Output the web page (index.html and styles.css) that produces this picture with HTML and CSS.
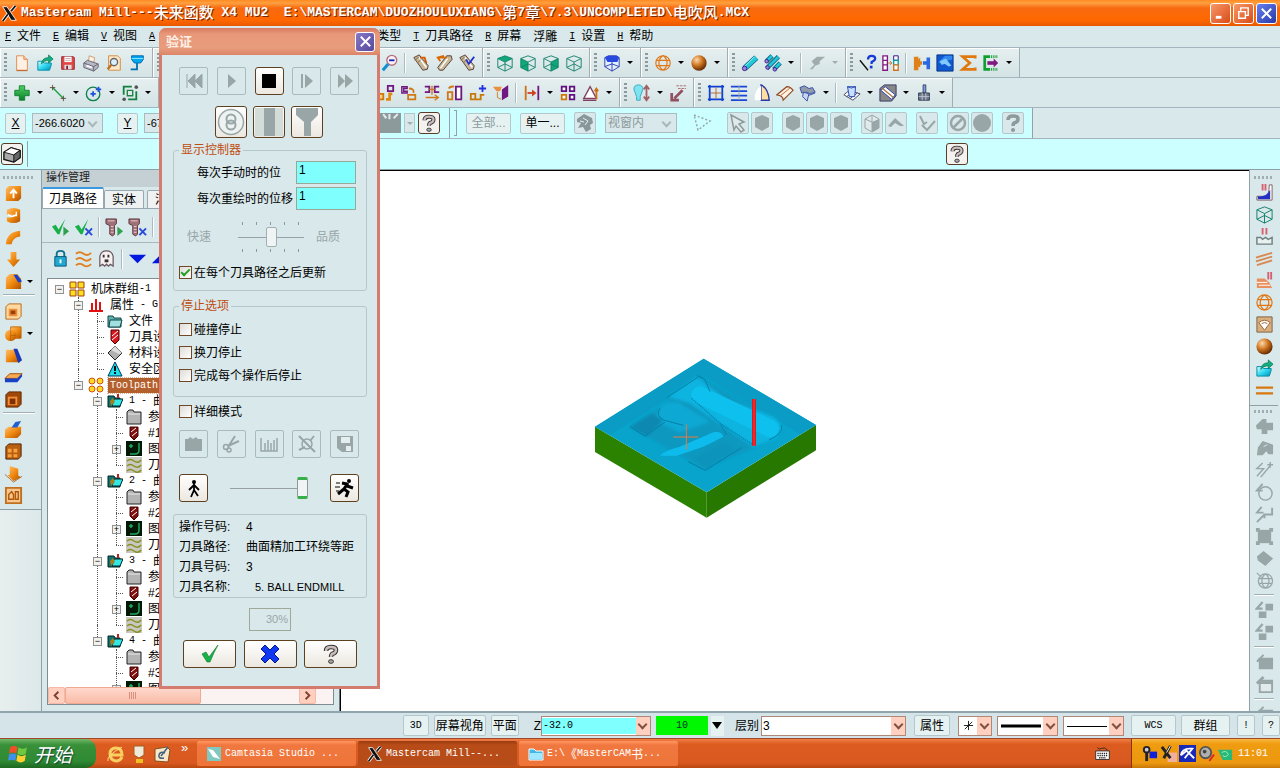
FILE: index.html
```html
<!DOCTYPE html>
<html lang="zh-CN">
<head>
<meta charset="utf-8">
<title>Mastercam Mill</title>
<link rel="stylesheet" href="styles.css">
</head>
<body>
<svg class="sprite" aria-hidden="true">
<defs>
<linearGradient id="gOr" x1="0" y1="0" x2="1" y2="1"><stop offset="0" stop-color="#ffc070"/><stop offset=".5" stop-color="#f08a10"/><stop offset="1" stop-color="#b05000"/></linearGradient>
<radialGradient id="gBall" cx=".35" cy=".3" r=".75"><stop offset="0" stop-color="#ffd9a8"/><stop offset=".5" stop-color="#cc7420"/><stop offset="1" stop-color="#5a2400"/></radialGradient>
<linearGradient id="gCy" x1="0" y1="0" x2="1" y2="1"><stop offset="0" stop-color="#e0ffff"/><stop offset=".5" stop-color="#30d8f0"/><stop offset="1" stop-color="#0090b8"/></linearGradient>
<linearGradient id="gGr" x1="0" y1="0" x2="0" y2="1"><stop offset="0" stop-color="#50d060"/><stop offset="1" stop-color="#0a8030"/></linearGradient>
</defs>
<symbol id="logo" viewBox="0 0 20 20"><path d="M2 2h5l11 16h-6z" fill="#111" stroke="#fff"/><path d="M17 1l-5 6M8 11l-6 8" stroke="#fff" stroke-width="4"/><path d="M17 1l-5 6M8 11l-6 8" stroke="#111" stroke-width="2"/></symbol>
<symbol id="new" viewBox="0 0 20 20"><path d="M4 2h8l4 4v12H4z" fill="#fff0e4" stroke="#e08850"/><path d="M12 2v4h4" fill="#ffc8a0" stroke="#e08850"/><path d="M4 18.500h12" stroke="#c05818"/></symbol>
<symbol id="open" viewBox="0 0 20 20"><path d="M2 18V8h5l2 2h8v2l-2 6z" fill="url(#gCy)" stroke="#008ca8"/><path d="M6 11q1-7 8-7V1l5 4.500-5 4.500V7q-5 0-8 4z" fill="#10b080" stroke="#006848" stroke-width=".7"/></symbol>
<symbol id="save" viewBox="0 0 20 20"><path d="M3 3h13l1 1v13H3z" fill="#e04848" stroke="#902030"/><path d="M6 3h8v6H6z" fill="#fff"/><path d="M7 5h6M7 7h6" stroke="#b0b0b0"/><path d="M6 12h8v5H6z" fill="#ddd"/><path d="M8 13h2v4H8z" fill="#802030"/></symbol>
<symbol id="print" viewBox="0 0 20 20"><path d="M7 9l1-7 6 2-1 6z" fill="#fff0e0" stroke="#c89870"/><path d="M2 10l4-3 12 4v4l-5 4-11-4z" fill="#b8b8c4" stroke="#606070"/><path d="M2 10l11 4 5-3M13 14v5" fill="none" stroke="#606070"/><path d="M5 13l6 2" stroke="#fff" stroke-width="2"/></symbol>
<symbol id="preview" viewBox="0 0 20 20"><path d="M4 2h10l3 3v13H4z" fill="#ffe8c8" stroke="#d08840"/><circle cx="10" cy="9" r="4" fill="#d8f0ff" stroke="#666" stroke-width="1.500"/><path d="M7 12l-4 5" stroke="#b87020" stroke-width="2.500"/></symbol>
<symbol id="plug" viewBox="0 0 20 20"><path d="M4 2h13v4l-3 4h-7L4 6z" fill="#00a8f0" stroke="#0060a8"/><path d="M4 5h13" stroke="#90e8ff"/><path d="M10 10v7H3" fill="none" stroke="#0070b0" stroke-width="2"/></symbol>
<symbol id="zoomout" viewBox="0 0 20 20"><circle cx="12" cy="7" r="5.500" fill="#fff0f0" stroke="#b07080" stroke-width="1.500"/><path d="M9 7h6" stroke="#1020c0" stroke-width="2"/><path d="M8 11l-6 7" stroke="#1090d0" stroke-width="3.500"/></symbol>
<symbol id="pen" viewBox="0 0 20 20"><path d="M2 4l6-3 10 12-1 4-5 1z" fill="#c8b898" stroke="#503830"/><path d="M7 3l9 12" stroke="#fff" stroke-width="1.500"/><path d="M3 7l5-4M6 10l4-4" stroke="#806040"/></symbol>
<symbol id="pen1" viewBox="0 0 20 20"><use href="#pen"/><path d="M9 4l5 0 2 6" fill="none" stroke="#d85800" stroke-width="2"/></symbol>
<symbol id="pen2" viewBox="0 0 20 20"><path d="M18 2l1 4-10 12H5l-2-3L13 2z" fill="#c8b898" stroke="#503830"/><path d="M14 5L6 16" stroke="#fff" stroke-width="1.500"/><path d="M10 2L3 4l3 4M3 4h10" fill="none" stroke="#d86800" stroke-width="2"/></symbol>
<symbol id="pen3" viewBox="0 0 20 20"><use href="#pen"/><path d="M9 6l3 5 6-8" fill="none" stroke="#2030d0" stroke-width="2"/></symbol>
<symbol id="cube" viewBox="0 0 20 20"><path d="M2 5l8-3 8 3v10l-8 4-8-4zM2 5l8 4 8-4M10 9v10M2 15l8-4 8 4" fill="none" stroke="#108068"/></symbol>
<symbol id="cubeT" viewBox="0 0 20 20"><path d="M2 5l8-3 8 3-8 4z" fill="#10a878"/><use href="#cube"/></symbol>
<symbol id="cubeF" viewBox="0 0 20 20"><path d="M2 5l8 4v10l-8-4z" fill="#10a878"/><use href="#cube"/></symbol>
<symbol id="cubeR" viewBox="0 0 20 20"><path d="M10 9l8-4v10l-8 4z" fill="#10a878"/><use href="#cube"/></symbol>
<symbol id="cubeB" viewBox="0 0 20 20"><path d="M2 4l4-2h9l3 2v10l-8 5-8-5z" fill="#e0f0ff" stroke="#2838a8"/><path d="M2 4l4-2h9l3 2-2 5H5z" fill="#2848e0"/><path d="M10 9v10M2 14l8-3 8 3" stroke="#2838a8" fill="none"/></symbol>
<symbol id="globe" viewBox="0 0 20 20"><path d="M10 2a8 8 0 100 16 8 8 0 000-16zM10 2c-6 4-6 12 0 16M10 2c6 4 6 12 0 16M3 7h14M3 13h14" fill="none" stroke="#e07818" stroke-width="1.300"/></symbol>
<symbol id="ball" viewBox="0 0 20 20"><circle cx="10" cy="10" r="8.500" fill="url(#gBall)"/></symbol>
<symbol id="tube" viewBox="0 0 20 20"><path d="M4 16L17 4" stroke="#106080" stroke-width="6.500"/><path d="M4 16L17 4" stroke="#20c8d8" stroke-width="5"/><path d="M4 14L15 3" stroke="#a0f8ff"/><circle cx="4" cy="16" r="2.500" fill="#a080e0" stroke="#302080"/></symbol>
<symbol id="tubes" viewBox="0 0 20 20"><path d="M3 8l6-6M3 16L16 3M11 17l7-7" stroke="#106080" stroke-width="5"/><path d="M3 8l6-6M3 16L16 3M11 17l7-7" stroke="#20c8d8" stroke-width="3"/><g fill="#a080e0" stroke="#302080"><circle cx="3" cy="8" r="2"/><circle cx="4" cy="15" r="2"/><circle cx="12" cy="17" r="2"/></g></symbol>
<symbol id="hose" viewBox="0 0 20 20"><path d="M2 17l5-5-3-4 6-5h9l-6 5v3l-5 2-3 4z" fill="#a0acac"/></symbol>
<symbol id="ask" viewBox="0 0 20 20"><path d="M1 7l9 11" stroke="#111" stroke-width="1.500"/><path d="M10 6q0-4 4-4t4 3q0 2-4 4v2" fill="none" stroke="#1838d8" stroke-width="2.500"/><path d="M12 13h3v3h-3z" fill="#1838d8"/></symbol>
<symbol id="cmp" viewBox="0 0 20 20"><path d="M1 2h5v16H1zM1 7h5M1 12h5" fill="#fff" stroke="#801880" stroke-width="1.500"/><path d="M13 2h5v5h-5z" fill="#fff" stroke="#208"/><path d="M13 7h5v5h-5z" fill="#fff" stroke="#00a0a0" stroke-width="1.500"/><path d="M13 12h5v6h-5z" fill="#fff" stroke="#d07020" stroke-width="1.500"/><path d="M7 10h4M9 8l2 2-2 2" stroke="#d07020" fill="none"/></symbol>
<symbol id="io" viewBox="0 0 20 20"><path d="M1 3h5v3l2-2v4h2v4H8v3l-2-1v4H1z" fill="#e08018"/><path d="M19 4h-4v4h-4v4h4v5h4z" fill="#2868e0"/></symbol>
<symbol id="bluebox" viewBox="0 0 20 20"><path d="M1 1h18v18H1z" fill="#1058d0" stroke="#003080"/><path d="M2 10l8-8h8v4z" fill="#3088f0"/><path d="M4 8l7-3 6 8-3 1-4-3-4 1z" fill="#80c8ff"/></symbol>
<symbol id="sigma" viewBox="0 0 20 20"><path d="M18 5V3H4l8 7-8 7h14v-2" fill="none" stroke="#e07810" stroke-width="3"/></symbol>
<symbol id="exit" viewBox="0 0 20 20"><path d="M9 3H3v14h6" fill="none" stroke="#10a030" stroke-width="3"/><path d="M6 10h8" stroke="#801880" stroke-width="4"/><path d="M13 5l5 5-5 5z" fill="#801880"/><path d="M10 3h8M10 17h8" stroke="#10a030" stroke-width="3" stroke-dasharray="1 1"/></symbol>
<symbol id="plus" viewBox="0 0 20 20"><path d="M7 2h6v5h5v6h-5v5H7v-5H2V7h5z" fill="url(#gGr)" stroke="#108030"/></symbol>
<symbol id="line" viewBox="0 0 20 20"><path d="M4 4l12 12" stroke="#18a040" stroke-width="1.500"/><path d="M1 4h6M4 1v6M13 16h6M16 13v6" stroke="#604838"/></symbol>
<symbol id="circ" viewBox="0 0 20 20"><circle cx="9" cy="11" r="7.500" fill="none" stroke="#108050" stroke-width="1.500"/><path d="M6 11h6M9 8v6M12 6h6M15 3v6" stroke="#2050e0" stroke-width="2"/></symbol>
<symbol id="rect" viewBox="0 0 20 20"><path d="M3 12V3h9M17 8v9H8" fill="none" stroke="#108040" stroke-width="2"/><path d="M7 7h6v6H7z" fill="none" stroke="#208040" stroke-width="1.500"/><circle cx="3.500" cy="17" r="2" fill="#555"/><circle cx="17" cy="3.500" r="2" fill="#555"/></symbol>
<symbol id="xf1" viewBox="0 0 20 20"><path d="M12 2h6v6h-6z" fill="none" stroke="#701880" stroke-width="2"/><path d="M2 11h5v6H2z" fill="#ffd080" stroke="#d07808" stroke-width="2"/><path d="M10 17h4v-6h3" fill="none" stroke="#e08810" stroke-width="3"/></symbol>
<symbol id="xf2" viewBox="0 0 20 20"><path d="M2 3h6v2H4v3h4v2H2z" fill="none" stroke="#701880" stroke-width="1.500"/><path d="M10 5q6 0 5 5M9 12h8v5H9z" fill="none" stroke="#d07818" stroke-width="2"/></symbol>
<symbol id="xf3" viewBox="0 0 20 20"><path d="M2 3h5v6H2M18 3h-5v6h5" fill="none" stroke="#701880" stroke-width="2"/><path d="M10 2v10M7 6h6M3 15h13M13 12l4 3-4 3" fill="none" stroke="#d07818" stroke-width="1.500"/></symbol>
<symbol id="xf4" viewBox="0 0 20 20"><path d="M2 9h5v8H2zM3 5q2-3 6-2" fill="none" stroke="#d07818" stroke-width="2"/><path d="M11 3h6v14h-6z" fill="#fff" stroke="#701880" stroke-width="2"/></symbol>
<symbol id="xf5" viewBox="0 0 20 20"><path d="M15 1v8M11 5h8" stroke="#2030e0" stroke-width="2"/><path d="M2 11h5v6H2zM8 17h5v-5h4" fill="none" stroke="#c87808" stroke-width="2"/></symbol>
<symbol id="xf6" viewBox="0 0 20 20"><path d="M1 3h10l-2 5H5z" fill="#e89040"/><path d="M11 6l7-5v13l-7 4z" fill="#701880"/><path d="M6 9v6l4 2" stroke="#d07818" fill="none"/></symbol>
<symbol id="dim" viewBox="0 0 20 20"><path d="M3 2v16" stroke="#d07010" stroke-width="2"/><path d="M17 2v16" stroke="#701880" stroke-width="2"/><path d="M5 10h8" stroke="#d04020" stroke-width="2"/><path d="M10 6l5 4-5 4z" fill="#d04020"/></symbol>
<symbol id="four" viewBox="0 0 20 20"><path d="M3 3h5v5H3zM12 3h5v5h-5zM12 12h5v5h-5z" fill="#fff" stroke="#601080" stroke-width="2"/><path d="M3 12h5v5H3z" fill="#fff" stroke="#d07808" stroke-width="2"/></symbol>
<symbol id="tri" viewBox="0 0 20 20"><path d="M2 16L9 3l7 13zM1 18h15" fill="#fff" stroke="#804060" stroke-width="1.500"/><path d="M16 17V5M14 8l2-3 2 3" stroke="#d07010" fill="none" stroke-width="2"/></symbol>
<symbol id="bulb" viewBox="0 0 20 20"><path d="M1 6q0-5 5-5t5 5l-3 8v4H4v-4z" fill="#80e4f0" stroke="#30a8c0"/><path d="M15 3v14M12 6l3-4 3 4M12 14l3 4 3-4" fill="none" stroke="#a06068" stroke-width="2"/></symbol>
<symbol id="arrdn" viewBox="0 0 20 20"><path d="M15 7l-9 9M3 10v8h8" fill="none" stroke="#905060" stroke-width="3"/><path d="M8 2h11M10 5h9" stroke="#b06868" stroke-dasharray="3 1"/></symbol>
<symbol id="gridb" viewBox="0 0 20 20"><path d="M3 1v18M17 1v18M1 3h18M1 17h18" stroke="#1040d0" stroke-width="2"/><path d="M10 4v12M4 10h12" stroke="#b06030"/></symbol>
<symbol id="rows" viewBox="0 0 20 20"><path d="M1 3h18M1 8h18M1 13h18M1 18h18" stroke="#1848d8" stroke-width="2"/><path d="M10 2v16" stroke="#a0a0a0"/></symbol>
<symbol id="half" viewBox="0 0 20 20"><path d="M9 1q8 4 9 17H9z" fill="#ffe0a0" stroke="#2838a0" stroke-width="1.500"/><path d="M9 2Q1 8 2 18h7z" fill="#fff"/></symbol>
<symbol id="slab" viewBox="0 0 20 20"><path d="M1 12L12 3q4 0 7 4L8 18q0-5-7-6z" fill="#fff0e0" stroke="#904820" stroke-width="1.300"/><path d="M5 13L16 4" stroke="#b06030"/></symbol>
<symbol id="mix" viewBox="0 0 20 20"><path d="M1 4l5-2 5 3 4-1 3 5-6 2-3-2-6 1z" fill="#909aa8" stroke="#3048a8"/><path d="M5 9l6 2-2 8-5-5zM10 13l8-3" fill="#c8d4f0" stroke="#3048a8"/></symbol>
<symbol id="wire" viewBox="0 0 20 20"><path d="M1 12l6-5 12 4-8 7z" fill="#fff" stroke="#384060"/><path d="M4 14l9-6M8 16l8-6" stroke="#384060"/><path d="M5 3h9l-1 11H7zM5 3q4 3 9 0" fill="#c8e0ff" stroke="#2040b0"/></symbol>
<symbol id="wire2" viewBox="0 0 20 20"><path d="M1 5l5-4h13v12l-5 6H1z" fill="#888" stroke="#303060"/><path d="M2 7l12 10 4-5L7 3z" fill="#fff" stroke="#2040b0"/><path d="M4 5l12 10" stroke="#b07840" stroke-width="1.500"/></symbol>
<symbol id="stamp" viewBox="0 0 20 20"><path d="M9 1h3v9H9z" fill="#80a0d0" stroke="#304070"/><path d="M4 10h12v8H4z" fill="#707888" stroke="#283048"/><path d="M4 14h12M8 10v8M12 10v8" stroke="#c0c8d8"/></symbol>
<symbol id="q" viewBox="0 0 20 20"><path d="M5 7q0-4 5-4t5 3q0 3-4 4-1 1-1 3" fill="none" stroke="#333" stroke-width="4.500"/><path d="M5 7q0-4 5-4t5 3q0 3-4 4-1 1-1 3" fill="none" stroke="#cbbcbc" stroke-width="2.500"/><ellipse cx="10" cy="17.500" rx="2.500" ry="1.800" fill="#aaa" stroke="#333"/></symbol>
<symbol id="qg" viewBox="0 0 20 20"><path d="M5 7q0-4 5-4t5 3q0 3-4 4-1 1-1 3" fill="none" stroke="#8c9a9c" stroke-width="3.500"/><circle cx="10" cy="17" r="2" fill="#8c9a9c"/></symbol>
<symbol id="box3" viewBox="0 0 20 20"><path d="M1 8l8-5 10 3v8l-7 5-11-3z" fill="#aaa" stroke="#111" stroke-width="1.500"/><path d="M1 8l8-5 10 3-7 5z" fill="#fff" stroke="#111"/><path d="M12 11l7-5v8l-7 5z" fill="#666" stroke="#111"/></symbol>
<symbol id="gcur" viewBox="0 0 20 20"><path d="M3 2l13 7-5 2 5 6-3 2-5-6-2 4z" fill="#e0eaea" stroke="#8c9a9c" stroke-width="1.500"/></symbol>
<symbol id="gball" viewBox="0 0 20 20"><path d="M10 2l7 3v9l-7 4-7-4V5z" fill="#98a6a8"/></symbol>
<symbol id="gcircle" viewBox="0 0 20 20"><circle cx="10" cy="10" r="9" fill="#98a6a8"/></symbol>
<symbol id="gno" viewBox="0 0 20 20"><circle cx="10" cy="10" r="7" fill="none" stroke="#98a6a8" stroke-width="2.500"/><path d="M5 15L15 5" stroke="#98a6a8" stroke-width="2.500"/></symbol>
<symbol id="gcube" viewBox="0 0 20 20"><path d="M3 6l7-4 7 4v9l-7 4-7-4z" fill="#e0eaea" stroke="#98a6a8"/><path d="M10 9l7-3v9l-7 4z" fill="#98a6a8"/><path d="M3 6l7 3v10M10 2v7" stroke="#98a6a8" fill="none"/></symbol>
<symbol id="gback" viewBox="0 0 20 20"><path d="M2 13l7-8 9 8h-4l-5-3-4 4z" fill="#98a6a8"/></symbol>
<symbol id="gchk" viewBox="0 0 20 20"><path d="M3 3l4 8 3-2M5 12l5 5 8-9" fill="none" stroke="#98a6a8" stroke-width="2"/></symbol>
<symbol id="gdots" viewBox="0 0 20 20"><path d="M2 2l16 6-12 9z" fill="none" stroke="#98a6a8" stroke-width="1.500" stroke-dasharray="2 2"/></symbol>
<symbol id="gmess" viewBox="0 0 20 20"><path d="M2 6l7-5 8 4 1 5-3 2 1 4-5 3-3-5-5 1 3-5-4-1z" fill="#88989a"/><path d="M8 5l5 3-3 4M5 8l4 1" stroke="#e8f0f0" fill="none"/></symbol>
<symbol id="o1" viewBox="0 0 20 20"><path d="M2 5l3-3h13v13l-3 3H2z" fill="url(#gOr)"/><path d="M10 15V7M6.500 10L10 6l3.500 4" stroke="#fff" stroke-width="2" fill="none"/></symbol>
<symbol id="o2" viewBox="0 0 20 20"><path d="M3 4q7-4 14 0v12q-7 4-14 0v-4h5V9H3z" fill="url(#gOr)"/><path d="M4 9q5 4 9 0M13 6v4H9" stroke="#fff" stroke-width="1.500" fill="none"/></symbol>
<symbol id="o3" viewBox="0 0 20 20"><path d="M2 17Q3 4 17 3v6q-8 1-9 8z" fill="url(#gOr)"/></symbol>
<symbol id="o4" viewBox="0 0 20 20"><path d="M7 2h6v8h4l-7 8-7-8h4z" fill="url(#gOr)"/></symbol>
<symbol id="o5" viewBox="0 0 20 20"><path d="M2 6l4-4h8l4 5v11H2z" fill="url(#gOr)"/><path d="M10 3h4l5 7-4 1z" fill="#1840c8"/></symbol>
<symbol id="o6" viewBox="0 0 20 20"><path d="M2 5l3-3h13v13l-3 3H2z" fill="#ffd8a0" stroke="#b86818"/><path d="M6 8h7v6H6z" fill="#a04000" stroke="#e89040" stroke-width="2"/></symbol>
<symbol id="o7" viewBox="0 0 20 20"><path d="M7 3h11v12H7z" fill="url(#gOr)" stroke="#c07010"/><circle cx="7" cy="12" r="6" fill="url(#gOr)"/><path d="M7 7v11M7 12h6" stroke="#b06008" stroke-width=".8"/></symbol>
<symbol id="o8" viewBox="0 0 20 20"><path d="M2 4h9l6 13H2z" fill="url(#gOr)"/><path d="M10 3h4l5 12-4 3z" fill="#1838b8"/></symbol>
<symbol id="o9" viewBox="0 0 20 20"><path d="M1 11l5-5h13l-5 5z" fill="#f8a850" stroke="#a05008"/><path d="M1 11h13l5-5v3l-5 6H1z" fill="#1840c8"/></symbol>
<symbol id="o10" viewBox="0 0 20 20"><path d="M2 5l3-3h13v13l-3 3H2z" fill="#a04808" stroke="#602800"/><path d="M4 7h10v9H4z" fill="#f09038"/><path d="M6 9h6v6H6z" fill="#803000"/></symbol>
<symbol id="o11" viewBox="0 0 20 20"><path d="M1 10l4-3h13v8l-4 4H1z" fill="url(#gOr)"/><path d="M8 8l4-6 6-1-4 7z" fill="#2060d0"/></symbol>
<symbol id="o12" viewBox="0 0 20 20"><path d="M2 5l3-3h13v13l-3 3H2z" fill="#b86010" stroke="#502000"/><path d="M4 7h4v4H4zM10 7h4v4h-4zM4 13h4v3H4zM10 13h4v3h-4z" fill="#f8a040"/></symbol>
<symbol id="o13" viewBox="0 0 20 20"><path d="M6 2l9 3v7l3 2-8 4-6-6 2-1z" fill="url(#gOr)"/><path d="M1 11l9 8 9-6" fill="none" stroke="#b07030"/></symbol>
<symbol id="o14" viewBox="0 0 20 20"><path d="M2 2h16v16H2z" fill="#f8c890" stroke="#c07020" stroke-width="2"/><path d="M5 9l3-3 2 3v5H5zM12 6h3v8h-3z" fill="none" stroke="#b05808" stroke-width="1.500"/></symbol>
<symbol id="r1" viewBox="0 0 20 20"><path d="M2 14h9q4-1 4-12h3v16H2z" fill="#fff" stroke="#806060"/><path d="M3 14q9 1 13-7v10H3z" fill="#2030c0"/><path d="M8 1v7M11 1v7" stroke="#d86070" stroke-width="2"/></symbol>
<symbol id="r2" viewBox="0 0 20 20"><path d="M8 1v7M12 1v7" stroke="#d86070" stroke-width="2"/><path d="M2 11h4l2 2 3-2 3 2 4-2v7H2z" fill="#e8f0f0" stroke="#708080" stroke-width="1.500"/></symbol>
<symbol id="r3" viewBox="0 0 20 20"><path d="M1 9L18 4M1 13l17-5M2 17l16-5" stroke="#d88850" stroke-width="2"/></symbol>
<symbol id="r4" viewBox="0 0 20 20"><path d="M2 8h8l5 4 3 6H2z" fill="#e89060"/><path d="M2 12h11M4 15h12" stroke="#fff"/><path d="M14 1v8M17 1v8" stroke="#d86070" stroke-width="2"/></symbol>
<symbol id="r5" viewBox="0 0 20 20"><path d="M2 2h16v16H2z" fill="#d8b080" stroke="#806040"/><path d="M4 8q6-5 12 0l-6 8zM7 9q3-2 6 0" fill="#fff" stroke="#a06030"/></symbol>
<symbol id="r6" viewBox="0 0 20 20"><path d="M1 7h18M1 13h18" stroke="#d87810" stroke-width="2.500"/></symbol>
<symbol id="g1" viewBox="0 0 20 20"><path d="M1 9l7-7h4v4h7v8h-6v4H7v-5H2z" fill="#98a6a8"/></symbol>
<symbol id="g2" viewBox="0 0 20 20"><path d="M3 9l5-7 11 4v10h-5l-2-3-4 4H2z" fill="#98a6a8"/><path d="M9 8l4-2" stroke="#d9e8ea"/></symbol>
<symbol id="g3" viewBox="0 0 20 20"><path d="M8 2L2 8h7L2 16M6 17L16 5M13 4h6M16 1v6" stroke="#98a6a8" stroke-width="1.500" fill="none"/></symbol>
<symbol id="g4" viewBox="0 0 20 20"><circle cx="11" cy="11" r="7" fill="none" stroke="#98a6a8" stroke-width="1.500"/><path d="M8 1L2 8h6" stroke="#98a6a8" stroke-width="2" fill="none"/></symbol>
<symbol id="g5" viewBox="0 0 20 20"><path d="M7 2L2 8h7M18 3v7h-8q-3 3-8 8M10 9v5" stroke="#98a6a8" stroke-width="2" fill="none"/></symbol>
<symbol id="g6" viewBox="0 0 20 20"><path d="M3 3h14v14H3z" fill="#98a6a8"/><path d="M1 1h4v4H1zM15 1h4v4h-4zM1 15h4v4H1zM15 15h4v4h-4z" fill="#98a6a8"/></symbol>
<symbol id="g7" viewBox="0 0 20 20"><path d="M2 8l7-6 10 8-8 8-8-6z" fill="#98a6a8"/></symbol>
<symbol id="g8" viewBox="0 0 20 20"><path d="M11 3a7.500 7.500 0 100 15 7.500 7.500 0 000-15zM11 3c-5 4-5 11 0 15M11 3c5 4 5 11 0 15M4 8h14M4 13h14M2 2l5 5" fill="none" stroke="#98a6a8" stroke-width="1.300"/></symbol>
<symbol id="g9" viewBox="0 0 20 20"><path d="M11 3h8v7h-8zM4 11h8v7H4z" fill="#98a6a8"/><path d="M8 1L2 8h6" stroke="#98a6a8" stroke-width="2.500" fill="none"/></symbol>
<symbol id="g10" viewBox="0 0 20 20"><path d="M4 5h15v12H4V9H2z" fill="#98a6a8"/><path d="M9 2L2 9" stroke="#98a6a8" stroke-width="2"/></symbol>
<symbol id="g11" viewBox="0 0 20 20"><path d="M5 6h13v12H5z" fill="#e0eaea" stroke="#98a6a8" stroke-width="2"/><path d="M4 8h14M9 2L2 9" stroke="#98a6a8" stroke-width="3"/></symbol>
<symbol id="chk" viewBox="0 0 20 20"><path d="M2 10l4-2 3 5L18 1q-4 7-8 17H7z" fill="#18b048" stroke="#0a7830" stroke-width=".6"/></symbol>
<symbol id="chkP" viewBox="0 0 20 20"><path d="M1 9l4-2 3 5L15 1q-3 7-6 16H7z" fill="#18b048"/><path d="M13 9l6 5-6 5z" fill="#30a050"/></symbol>
<symbol id="chkX" viewBox="0 0 20 20"><path d="M1 9l4-2 3 5L15 1q-3 7-6 16H7z" fill="#18b048"/><path d="M12 11l7 7M19 11l-7 7" stroke="#2848d8" stroke-width="2"/></symbol>
<symbol id="scrP" viewBox="0 0 20 20"><path d="M1 1h11v5l-2 2v9l-2 2-3-2V8L1 6z" fill="#a07078" stroke="#603840"/><path d="M3 3h7M6 9h3M6 12h3M6 15h3" stroke="#e8d0d0"/><path d="M13 9l6 5-6 5z" fill="#30a050"/></symbol>
<symbol id="scrX" viewBox="0 0 20 20"><path d="M1 1h11v5l-2 2v9l-2 2-3-2V8L1 6z" fill="#a07078" stroke="#603840"/><path d="M3 3h7M6 9h3M6 12h3M6 15h3" stroke="#e8d0d0"/><path d="M12 11l7 7M19 11l-7 7" stroke="#2848d8" stroke-width="2"/></symbol>
<symbol id="lock" viewBox="0 0 20 20"><path d="M6 9V5q0-3 4-3t4 3v4" fill="none" stroke="#107090" stroke-width="2"/><path d="M4 8h12v10H4z" fill="#20a8d0" stroke="#085878"/><path d="M9 11h2v4H9z" fill="#fff"/></symbol>
<symbol id="waves" viewBox="0 0 20 20"><path d="M2 5q4-3 8 0t8-1M2 11q4-3 8 0t8-1M2 17q4-3 8 0t8-1" fill="none" stroke="#e08020" stroke-width="2"/></symbol>
<symbol id="ghost" viewBox="0 0 20 20"><path d="M3 18V8q1-6 7-6t7 6v10l-3-2-2 2-2-2-2 2-2-2z" fill="#f8f0f0" stroke="#685860" stroke-width="1.300"/><path d="M7 6v3M12 6v3" stroke="#333" stroke-width="2"/><path d="M8 11h4v3H8z" fill="#333"/></symbol>
<symbol id="down" viewBox="0 0 20 20"><path d="M1 6h18l-9 9z" fill="#0018e0"/></symbol>
<symbol id="up" viewBox="0 0 20 20"><path d="M1 15h18l-9-9z" fill="#0018e0"/></symbol>
<symbol id="tgrp" viewBox="0 0 16 16"><path d="M1 1h6v6H1zM9 1h6v6H9zM1 9h6v6H1zM9 9h6v6H9z" fill="#ffe020" stroke="#a04010"/></symbol>
<symbol id="tprop" viewBox="0 0 16 16"><path d="M1 14h14M4 14V6M8 14V2M12 14V5" stroke="#e01010" stroke-width="2"/></symbol>
<symbol id="tfold" viewBox="0 0 16 16"><path d="M1 3h5l1 2h7v9H1z" fill="#60b0b0" stroke="#104848"/><path d="M3 7h12l-2 7H2z" fill="#a0e0e0" stroke="#104848"/></symbol>
<symbol id="ttool" viewBox="0 0 16 16"><path d="M4 1h8v10l-4 4-4-4z" fill="#d81820" stroke="#500"/><path d="M5 7l6-5M5 11l6-5" stroke="#fff"/></symbol>
<symbol id="ttoolD" viewBox="0 0 16 16"><path d="M4 2h8v9l-4 4-4-4z" fill="#801010" stroke="#400"/><path d="M5 7l5-4M6 11l5-4" stroke="#fff"/></symbol>
<symbol id="tmat" viewBox="0 0 16 16"><path d="M8 1l7 7-7 7-7-7z" fill="#b0b0b0" stroke="#222"/><path d="M8 1l7 7-3 1-8-4z" fill="#ddd"/></symbol>
<symbol id="twarn" viewBox="0 0 16 16"><path d="M8 1l7 14H1z" fill="#20e0f0" stroke="#035"/><path d="M8 5v8" stroke="#111" stroke-width="2" stroke-dasharray="5 1"/></symbol>
<symbol id="tball" viewBox="0 0 16 16"><g fill="#ffd820" stroke="#d05010"><circle cx="4" cy="4" r="3"/><circle cx="12" cy="4" r="3"/><circle cx="4" cy="12" r="3"/><circle cx="12" cy="12" r="3"/></g></symbol>
<symbol id="top" viewBox="0 0 16 16"><path d="M1 3h6l1 2h5v9H1z" fill="#107070" stroke="#022"/><path d="M5 13l2-7h9l-3 7z" fill="#30e8e8" stroke="#022"/><path d="M3 8l3-3 2 4-4 4z" fill="#a08020"/><path d="M11 1v4" stroke="#c02020" stroke-width="2"/></symbol>
<symbol id="tgf" viewBox="0 0 16 16"><path d="M1 3l2-2h4l1 2h7v12H1z" fill="#b4b4b4" stroke="#222"/><path d="M2 5h12" stroke="#e8e8e8"/></symbol>
<symbol id="tgeo" viewBox="0 0 16 16"><path d="M0 0h16v15H0z" fill="#041808"/><path d="M4 13h5q4 0 4-4V2M3 5h4M5 3v4" fill="none" stroke="#20a860" stroke-width="1.500"/></symbol>
<symbol id="tpath" viewBox="0 0 16 16"><path d="M0 0h16v16H0z" fill="#c8c8c0"/><path d="M1 4q3-3 7 0t7-1M1 9q3-3 7 0t7-1M1 14q3-3 7 0t7-1" fill="none" stroke="#889020" stroke-width="1.500"/></symbol>
</svg>

<header class="titlebar">
  <svg class="i16"><use href="#logo"/></svg>
  <h1><span>Mastercam Mill---</span><b>未来函数</b><span> X4 MU2&nbsp; E:\MASTERCAM\DUOZHOULUXIANG\</span><b>第</b><span>7</span><b>章</b><span>\7.3\UNCOMPLETED\</span><b>电吹风</b><span>.MCX</span></h1>
  <div class="winbtns">
    <button class="wb" aria-label="最小化"><svg viewBox="0 0 18 18"><path d="M4 13h6" stroke="#fff" stroke-width="3"/></svg></button>
    <button class="wb" aria-label="还原"><svg viewBox="0 0 18 18"><path d="M6 6V3h8v8h-3M4 7h7v7H4z" fill="none" stroke="#fff" stroke-width="1.500"/></svg></button>
    <button class="wb blue" aria-label="关闭"><svg viewBox="0 0 18 18"><path d="M4 4l10 10M14 4L4 14" stroke="#fff" stroke-width="2"/></svg></button>
  </div>
</header>

<nav class="menubar">
  <a href="#"><u>F</u>文件</a><a href="#"><u>E</u>编辑</a><a href="#"><u>V</u>视图</a><a href="#" class="analyze" aria-label="分析"><u>A</u></a><a href="#"><u>C</u>绘图</a><a href="#"><u>S</u>实体</a><a href="#"><u>X</u>转换</a><a href="#"><u>M</u>机床类型</a><a href="#"><u>T</u>刀具路径</a><a href="#"><u>R</u>屏幕</a><a href="#">浮雕</a><a href="#"><u>I</u>设置</a><a href="#"><u>H</u>帮助</a>
</nav>

<div class="row">
  <div class="grp">
    <button class="t" aria-label="新建"><svg><use href="#new"/></svg></button><button class="t" aria-label="打开"><svg><use href="#open"/></svg></button><button class="t" aria-label="保存"><svg><use href="#save"/></svg></button><button class="t" aria-label="打印"><svg><use href="#print"/></svg></button><button class="t" aria-label="预览"><svg><use href="#preview"/></svg></button><button class="t" aria-label="转换"><svg><use href="#plug"/></svg></button>
  </div>
  <div class="grp">
    <span class="t"></span><span class="t"></span><span class="t"></span><span class="t"></span><i class="s"></i><span class="t"></span><span class="t"></span><span class="t"></span><span class="t"></span><span class="t"></span>
    <button class="t" aria-label="缩小"><svg><use href="#zoomout"/></svg></button><i class="s"></i><button class="t" aria-label="删除"><svg><use href="#pen1"/></svg></button><button class="t" aria-label="恢复"><svg><use href="#pen2"/></svg></button><button class="t" aria-label="清除"><svg><use href="#pen3"/></svg></button>
  </div>
  <div class="grp">
    <button class="t" aria-label="顶视"><svg><use href="#cubeT"/></svg></button><button class="t" aria-label="前视"><svg><use href="#cubeF"/></svg></button><button class="t" aria-label="右视"><svg><use href="#cubeR"/></svg></button><button class="t" aria-label="等视"><svg><use href="#cube"/></svg></button>
  </div>
  <div class="grp"><button class="t" aria-label="平面"><svg><use href="#cubeB"/></svg></button><button class="a" aria-label="更多"></button></div>
  <div class="grp"><button class="t" aria-label="线框"><svg><use href="#globe"/></svg></button><button class="a" aria-label="更多"></button><button class="t" aria-label="着色"><svg><use href="#ball"/></svg></button><button class="a" aria-label="更多"></button></div>
  <div class="grp"><button class="t" aria-label="实体"><svg><use href="#tube"/></svg></button><button class="t" aria-label="多实体"><svg><use href="#tubes"/></svg></button><button class="a" aria-label="更多"></button><i class="s"></i><button class="t" disabled aria-label="软管"><svg><use href="#hose"/></svg></button><button class="a off" disabled aria-label="更多"></button></div>
  <div class="grp"><button class="t" aria-label="分析"><svg><use href="#ask"/></svg></button><button class="t" aria-label="比较"><svg><use href="#cmp"/></svg></button><i class="s"></i><button class="t" aria-label="连接"><svg><use href="#io"/></svg></button><button class="t" aria-label="渲染"><svg><use href="#bluebox"/></svg></button><button class="t" aria-label="统计"><svg><use href="#sigma"/></svg></button><button class="t" aria-label="运行"><svg><use href="#exit"/></svg></button><button class="a" aria-label="更多"></button></div>
</div>

<div class="row">
  <div class="grp">
    <button class="t" aria-label="点"><svg><use href="#plus"/></svg></button><button class="a" aria-label="更多"></button><button class="t" aria-label="直线"><svg><use href="#line"/></svg></button><button class="a" aria-label="更多"></button><button class="t" aria-label="圆"><svg><use href="#circ"/></svg></button><button class="a" aria-label="更多"></button><button class="t" aria-label="矩形"><svg><use href="#rect"/></svg></button><button class="a" aria-label="更多"></button>
  </div>
  <div class="grp">
    <span class="t"></span><span class="t"></span><span class="t"></span><span class="t"></span><i class="s"></i><span class="t"></span><span class="t"></span><span class="t"></span><span class="t"></span><span class="a off"></span>
    <button class="t" aria-label="平移"><svg><use href="#xf1"/></svg></button><button class="t" aria-label="旋转"><svg><use href="#xf2"/></svg></button><button class="t" aria-label="镜像"><svg><use href="#xf3"/></svg></button><button class="t" aria-label="比例"><svg><use href="#xf4"/></svg></button><button class="t" aria-label="补正"><svg><use href="#xf5"/></svg></button><button class="t" aria-label="缠绕"><svg><use href="#xf6"/></svg></button><i class="s"></i><button class="t" aria-label="投影"><svg><use href="#dim"/></svg></button><button class="a" aria-label="更多"></button><button class="t" aria-label="阵列"><svg><use href="#four"/></svg></button><button class="t" aria-label="拖曳"><svg><use href="#tri"/></svg></button><button class="a" aria-label="更多"></button>
  </div>
  <div class="grp"><button class="t" aria-label="灯"><svg><use href="#bulb"/></svg></button><button class="a" aria-label="更多"></button><button class="t" aria-label="引线"><svg><use href="#arrdn"/></svg></button></div>
  <div class="grp"><button class="t" aria-label="网格"><svg><use href="#gridb"/></svg></button><button class="t" aria-label="直纹"><svg><use href="#rows"/></svg></button><button class="t" aria-label="旋转面"><svg><use href="#half"/></svg></button><button class="t" aria-label="扫描"><svg><use href="#slab"/></svg></button><button class="t" aria-label="修剪"><svg><use href="#mix"/></svg></button><button class="a" aria-label="更多"></button><i class="s"></i><button class="t" aria-label="曲面"><svg><use href="#wire"/></svg></button><button class="a" aria-label="更多"></button><button class="t" aria-label="曲线"><svg><use href="#wire2"/></svg></button><button class="a" aria-label="更多"></button><button class="t" aria-label="加工"><svg><use href="#stamp"/></svg></button><button class="a" aria-label="更多"></button></div>
</div>

<div class="row coord">
  <div class="cgrp first">
    <button class="key"><u>X</u></button>
    <span class="combo gray num"><select aria-label="X"><option>-266.6020</option></select></span>
    <button class="key"><u>Y</u></button>
    <span class="combo gray num"><select aria-label="Y"><option>-67.3210</option></select></span>
    <span class="push dark"><svg viewBox="0 0 20 20"><path d="M3 1l3 4M9 1v5M17 1l-4 4" stroke="#dfe9ea" stroke-width="2"/></svg></span><button class="sm a off" disabled aria-label="更多"></button><button class="btn q" aria-label="帮助"><svg><use href="#q"/></svg></button>
  </div>
  <div class="cgrp second">
    <button class="key wide" disabled>全部...</button><button class="key wide">单一...</button>
    <button class="key g" disabled aria-label="选择"><svg><use href="#gmess"/></svg></button>
    <span class="combo gray win"><select disabled aria-label="窗选"><option>视窗内</option></select></span>
    <button class="flat" disabled aria-label="多边形"><svg><use href="#gdots"/></svg></button>
    <span class="gr"><button class="key g" disabled aria-label="选取"><svg><use href="#gcur"/></svg></button><button class="key g" disabled aria-label="实体"><svg><use href="#gball"/></svg></button></span>
    <span class="gr"><button class="key g" disabled aria-label="面"><svg><use href="#gball"/></svg></button><button class="key g" disabled aria-label="边"><svg><use href="#gball"/></svg></button><button class="key g" disabled aria-label="体"><svg><use href="#gball"/></svg></button></span>
    <span class="gr"><button class="key g" disabled aria-label="背面"><svg><use href="#gcube"/></svg></button><button class="key g" disabled aria-label="上次"><svg><use href="#gback"/></svg></button></span>
    <button class="key g" disabled aria-label="验证"><svg><use href="#gchk"/></svg></button>
    <span class="gr"><button class="key g" disabled aria-label="取消"><svg><use href="#gno"/></svg></button><button class="key g" disabled aria-label="结束"><svg><use href="#gcircle"/></svg></button></span>
    <button class="key g" disabled aria-label="帮助"><svg><use href="#qg"/></svg></button>
  </div>
</div>

<div class="row ribbon">
  <button class="btn q" aria-label="模型"><svg><use href="#box3"/></svg></button><i class="vline"></i>
  <button class="btn q help" aria-label="帮助"><svg><use href="#q"/></svg></button>
</div>

<main>
  <aside class="side">
    <div class="vbar">
      <i class="hgrip"></i>
      <button class="v" aria-label="挤出"><svg><use href="#o1"/></svg></button><button class="v" aria-label="旋转"><svg><use href="#o2"/></svg></button><button class="v" aria-label="扫掠"><svg><use href="#o3"/></svg></button><button class="v" aria-label="举升"><svg><use href="#o4"/></svg></button><div class="vv"><button class="v" aria-label="倒角"><svg><use href="#o5"/></svg></button><button class="a" aria-label="更多"></button></div>
      <i class="hs"></i>
      <button class="v" aria-label="抽壳"><svg><use href="#o6"/></svg></button><div class="vv"><button class="v" aria-label="布尔"><svg><use href="#o7"/></svg></button><button class="a" aria-label="更多"></button></div><button class="v" aria-label="牵引"><svg><use href="#o8"/></svg></button><button class="v" aria-label="薄片"><svg><use href="#o9"/></svg></button><button class="v" aria-label="修剪"><svg><use href="#o10"/></svg></button>
      <i class="hs"></i>
      <button class="v" aria-label="导入"><svg><use href="#o11"/></svg></button><button class="v" aria-label="特征"><svg><use href="#o12"/></svg></button><button class="v" aria-label="展开"><svg><use href="#o13"/></svg></button><button class="v" aria-label="布局"><svg><use href="#o14"/></svg></button>
    </div>
  </aside>

  <section class="manager">
    <h2>操作管理</h2>
    <div class="tabs" role="tablist"><button class="on" role="tab">刀具路径</button><button role="tab">实体</button><button role="tab">浮雕</button></div>
    <div class="mt"><button class="m" aria-label="全选"><svg><use href="#chkP"/></svg></button><button class="m" aria-label="取消"><svg><use href="#chkX"/></svg></button><i class="s"></i><button class="m" aria-label="重算"><svg><use href="#scrP"/></svg></button><button class="m" aria-label="重算失效"><svg><use href="#scrX"/></svg></button><i class="s"></i></div>
    <div class="mt"><button class="m" aria-label="锁定"><svg><use href="#lock"/></svg></button><button class="m" aria-label="显示"><svg><use href="#waves"/></svg></button><button class="m" aria-label="后处理"><svg><use href="#ghost"/></svg></button><i class="s"></i><button class="m" aria-label="下移"><svg><use href="#down"/></svg></button><button class="m" aria-label="上移"><svg><use href="#up"/></svg></button></div>
    <div class="treebox">
      <div class="tree">
        <ul class="root">
          <li><p><i class="x">−</i><svg><use href="#tgrp"/></svg>机床群组<tt>-1</tt></p>
            <ul>
              <li><p><i class="x">−</i><svg><use href="#tprop"/></svg>属性<tt>&nbsp;- G</tt></p>
                <ul>
                  <li><p><i class="d"></i><svg><use href="#tfold"/></svg>文件</p></li>
                  <li><p><i class="d"></i><svg><use href="#ttool"/></svg>刀具设</p></li>
                  <li><p><i class="d"></i><svg><use href="#tmat"/></svg>材料设</p></li>
                  <li><p><i class="d"></i><svg><use href="#twarn"/></svg>安全区</p></li>
                </ul></li>
              <li><p><i class="x">−</i><svg><use href="#tball"/></svg><mark>Toolpath</mark></p>
                <ul>
                  <li><p><i class="x">−</i><svg><use href="#top"/></svg><tt>1 -&nbsp;</tt>曲</p>
                    <ul><li><p><i class="d"></i><svg><use href="#tgf"/></svg>参</p></li><li><p><i class="d"></i><svg><use href="#ttoolD"/></svg>#1</p></li><li><p><i class="x">+</i><svg><use href="#tgeo"/></svg>图</p></li><li><p><i class="d"></i><svg><use href="#tpath"/></svg>刀</p></li></ul></li>
                  <li><p><i class="x">−</i><svg><use href="#top"/></svg><tt>2 -&nbsp;</tt>曲</p>
                    <ul><li><p><i class="d"></i><svg><use href="#tgf"/></svg>参</p></li><li><p><i class="d"></i><svg><use href="#ttoolD"/></svg>#2</p></li><li><p><i class="x">+</i><svg><use href="#tgeo"/></svg>图</p></li><li><p><i class="d"></i><svg><use href="#tpath"/></svg>刀</p></li></ul></li>
                  <li><p><i class="x">−</i><svg><use href="#top"/></svg><tt>3 -&nbsp;</tt>曲</p>
                    <ul><li><p><i class="d"></i><svg><use href="#tgf"/></svg>参</p></li><li><p><i class="d"></i><svg><use href="#ttoolD"/></svg>#2</p></li><li><p><i class="x">+</i><svg><use href="#tgeo"/></svg>图</p></li><li><p><i class="d"></i><svg><use href="#tpath"/></svg>刀</p></li></ul></li>
                  <li><p><i class="x">−</i><svg><use href="#top"/></svg><tt>4 -&nbsp;</tt>曲</p>
                    <ul><li><p><i class="d"></i><svg><use href="#tgf"/></svg>参</p></li><li><p><i class="d"></i><svg><use href="#ttoolD"/></svg>#3</p></li><li><p><i class="x">+</i><svg><use href="#tgeo"/></svg>图</p></li></ul></li>
                </ul></li>
            </ul></li>
        </ul>
      </div>
      <div class="hscroll"><button class="sb" aria-label="左"><svg viewBox="0 0 16 16"><path d="M10 4L6 8l4 4" fill="none" stroke="#804030" stroke-width="2"/></svg></button><div class="thumb"><i></i></div><div class="track"></div><button class="sb" aria-label="右"><svg viewBox="0 0 16 16"><path d="M6 4l4 4-4 4" fill="none" stroke="#804030" stroke-width="2"/></svg></button></div>
    </div>
  </section>

  <section class="canvas">
    <svg class="part" viewBox="0 0 750 555">
      <defs><filter id="soft"><feGaussianBlur stdDeviation="5"/></filter><filter id="soft2"><feGaussianBlur stdDeviation="2"/></filter></defs>
      <path d="M45 245L380 442V518L45 321z" fill="#2a8200"/><path d="M708 240L380 442V518L708 316z" fill="#267800"/>
      <path d="M371 41L708 240 380 442 45 245z" fill="#08a4cc"/>
      <path d="M371 41L708 240 660 268 371 94 90 270 45 245z" fill="#0a9cc4"/>
      <g filter="url(#soft)">
        <path d="M352 92L600 235 605 268 530 305 370 372 150 245 235 190z" fill="#0898c0"/>
        <path d="M350 95L265 155 330 175 440 250 520 305 590 280Q620 240 580 215L440 165z" fill="#08b4e0"/>
        <path d="M240 190Q260 160 300 175L390 230 300 262 220 225z" fill="#08a8d4"/>
        <path d="M150 245L215 205 250 225 200 275z" fill="#0888b0"/>
        <path d="M340 340L430 290 470 310 380 375z" fill="#0a94bc"/>
      </g>
      <g filter="url(#soft2)" fill="none">
        <path d="M360 150L570 250" stroke="#0cc0ee" stroke-width="52" stroke-linecap="round"/>
        <path d="M240 332Q250 318 300 305L400 262Q425 258 430 275L370 305 290 332z" fill="#10bcec"/>
        <path d="M352 92l22 10 16 38M260 158l95-62M150 245l45 28 60-42M325 350l50 26 110-68M605 240q5 28-38 45M240 190q-15 20 10 35l60 16" stroke="#0880a8" stroke-width="3"/>
        <path d="M420 235l20 35M335 160l85 75 100 65" stroke="#0884b0" stroke-width="4" stroke-dasharray="4 3"/>
      </g>
      <path d="M280 276h75M319 238v76" stroke="#e87840" stroke-width="3"/>
      <path d="M522 162v140" stroke="#c82028" stroke-width="12"/><path d="M522 162v140" stroke="#f02828" stroke-width="7"/>
    </svg>
  </section>

  <aside class="right">
    <div class="rbar">
    <i class="hgrip"></i>
    <button class="v" aria-label="刀路1"><svg><use href="#r1"/></svg></button><button class="v" aria-label="视图"><svg><use href="#cube"/></svg></button><button class="v" aria-label="刀路2"><svg><use href="#r2"/></svg></button><button class="v" aria-label="刀路3"><svg><use href="#r3"/></svg></button><button class="v" aria-label="刀路4"><svg><use href="#r4"/></svg></button><button class="v" aria-label="线框"><svg><use href="#globe"/></svg></button><button class="v" aria-label="口袋"><svg><use href="#r5"/></svg></button><button class="v" aria-label="着色"><svg><use href="#ball"/></svg></button><button class="v" aria-label="打开"><svg><use href="#open"/></svg></button><button class="v" aria-label="等号"><svg><use href="#r6"/></svg></button>
    </div>
    <div class="rbar gray2">
    <i class="hgrip"></i>
    <button class="v" disabled aria-label="点"><svg><use href="#g1"/></svg></button><button class="v" disabled aria-label="形"><svg><use href="#g2"/></svg></button><button class="v" disabled aria-label="线"><svg><use href="#g3"/></svg></button><button class="v" disabled aria-label="圆"><svg><use href="#g4"/></svg></button><button class="v" disabled aria-label="曲线"><svg><use href="#g5"/></svg></button><button class="v" disabled aria-label="面"><svg><use href="#g6"/></svg></button><button class="v" disabled aria-label="体"><svg><use href="#g7"/></svg></button><button class="v" disabled aria-label="球"><svg><use href="#g8"/></svg></button>
    <i class="hs"></i><button class="v" disabled aria-label="组"><svg><use href="#g9"/></svg></button><button class="v" disabled aria-label="组2"><svg><use href="#g9"/></svg></button>
    <i class="hs"></i><button class="v" disabled aria-label="层"><svg><use href="#g10"/></svg></button><button class="v" disabled aria-label="层2"><svg><use href="#g11"/></svg></button>
    <i class="hs"></i><button class="v" disabled aria-label="更多"><svg><use href="#g10"/></svg></button>
    </div>
  </aside>
</main>

<div class="status">
  <button class="key s3"><tt>3D</tt></button><button class="key s4">屏幕视角</button><button class="key s2">平面</button>
  <label for="zv" class="lz">Z</label>
  <span class="combo z"><input id="zv" value="-32.0"><i class="ch"></i></span>
  <button class="color">10</button><button class="a big" aria-label="颜色"></button>
  <label for="lv">层别</label>
  <span class="combo lv"><input id="lv" value="3"><i class="ch"></i></span>
  <button class="key s5">属性</button>
  <span class="combo pt"><button aria-label="点型"><svg viewBox="0 0 12 12"><path d="M6 1v10M1 6h10M2 10l8-8" stroke="#111"/></svg></button><i class="ch"></i></span>
  <span class="combo ln"><button aria-label="线型"><svg viewBox="0 0 40 12"><path d="M0 6h40" stroke="#000" stroke-width="3"/></svg></button><i class="ch"></i></span>
  <span class="combo ln2"><button aria-label="线宽"><svg viewBox="0 0 40 12"><path d="M0 6.500h40" stroke="#000"/></svg></button><i class="ch"></i></span>
  <button class="key s6"><tt>WCS</tt></button><button class="key s7">群组</button><button class="key s8"><tt>!</tt></button><button class="key s8"><tt>?</tt></button>
</div>

<footer class="taskbar">
  <button class="start"><svg viewBox="0 0 20 20"><path d="M2 4q4-3 7 0L8 10q-3-2-7 0z" fill="#f05028"/><path d="M10 4q4 3 8 0l-1 6q-4 3-8 0z" fill="#70c840"/><path d="M1 11q4-2 7 0l-1 6q-3-2-7 0z" fill="#4090f0"/><path d="M9 11q4 3 8 0l-1 6q-4 3-8 0z" fill="#ffd030"/></svg>开始</button>
  <div class="quick">
    <a href="#" aria-label="浏览器"><svg viewBox="0 0 20 20"><path d="M4 11h12q0-7-6-7t-6 6 6 7q4 0 6-4" fill="none" stroke="#f8d060" stroke-width="3"/><path d="M2 17Q0 12 16 3" fill="none" stroke="#ffe080"/></svg></a>
    <a href="#" aria-label="播放"><svg viewBox="0 0 20 20"><path d="M5 2h10v9l-5 3-5-3z" fill="#f0e8d8" stroke="#a06020"/><path d="M7 15h7v4H7z" fill="#f0c020"/></svg></a>
    <a href="#" aria-label="桌面"><svg viewBox="0 0 20 20"><path d="M3 5l12-2 3 3-2 12-13-1z" fill="#f8e8c8" stroke="#805020"/><path d="M9 12l7-9M13 9q-5-2-6 2t5 3" stroke="#406080" stroke-width="1.500" fill="none"/></svg></a>
    <span>»</span>
  </div>
  <div class="tasks">
    <button><svg viewBox="0 0 16 16"><path d="M1 1h14v14H1z" fill="#80c8c0"/><path d="M2 3l5 1 7 9-7-2z" fill="#fff"/></svg>Camtasia Studio ...</button>
    <button class="act"><svg viewBox="0 0 20 20"><use href="#logo"/></svg>Mastercam Mill--...</button>
    <button><svg viewBox="0 0 16 16"><path d="M1 3h5l2 2h7v9H1z" fill="#40b8e8" stroke="#fff"/><path d="M2 7h12v6H2z" fill="#a0e8ff"/></svg>E:\<em>《</em>MasterCAM<em>书</em>...</button>
  </div>
  <svg class="kbd" viewBox="0 0 20 20"><path d="M4 3q2 3 5 1t7 2" stroke="#222" fill="none"/><path d="M2 7h16v10H2z" fill="#fff" stroke="#222"/><path d="M4 10h12M4 12.500h12M6 15h8" stroke="#222" stroke-width="1.500" stroke-dasharray="1.500 1"/></svg>
  <div class="tray">
    <svg viewBox="0 0 18 18"><circle cx="6" cy="5" r="3" fill="#ccd" stroke="#222" stroke-width="2"/><path d="M6 8v9" stroke="#222" stroke-width="3"/><path d="M9 7h8v7H9z" fill="#1020d8"/></svg>
    <svg viewBox="0 0 18 18"><path d="M8 8h10v10H8z" fill="#f0b0a0"/><path d="M2 2l9 12M11 1L4 14" stroke="#222" stroke-width="3"/><path d="M11 1L7 8" stroke="#fff"/></svg>
    <svg viewBox="0 0 18 18"><path d="M0 0h18v18H0z" fill="#1828b8"/><path d="M2 11Q3 3 14 4L6 14M2 11l6-5 8 8" fill="none" stroke="#fff" stroke-width="2"/></svg>
    <svg viewBox="0 0 18 18"><circle cx="8" cy="8" r="6" fill="#b0b0b0" stroke="#555" stroke-width="2"/><circle cx="7" cy="7" r="2" fill="#444"/><path d="M17 10l-5 7" stroke="#e02020" stroke-width="2"/></svg>
    <svg viewBox="0 0 18 18"><path d="M1 5h15v11H6z" fill="#28b878"/><path d="M5 8q5-3 7 2-3 4-6 1" fill="none" stroke="#a0f0c0"/></svg>
    <time>11:01</time>
  </div>
</footer>

<section class="dialog" role="dialog" aria-label="验证">
  <header><h2>验证</h2><button class="close" aria-label="关闭"><svg viewBox="0 0 18 18"><path d="M4 4l10 10M14 4L4 14" stroke="#fff" stroke-width="2"/></svg></button></header>
  <div class="dbody">
    <div class="brow">
      <button class="db" disabled aria-label="回到起点"><svg viewBox="0 0 20 20"><path d="M3 3v14M11 3v14l-7-7zM18 3v14l-7-7z" fill="#98a6a8" stroke="#98a6a8"/></svg></button>
      <button class="db" disabled aria-label="播放"><svg viewBox="0 0 20 20"><path d="M7 3l8 7-8 7z" fill="#98a6a8"/></svg></button>
      <button class="db en" aria-label="停止"><svg viewBox="0 0 20 20"><path d="M3 3h14v14H3z" fill="#000"/></svg></button>
      <button class="db" disabled aria-label="单步"><svg viewBox="0 0 20 20"><path d="M5 3v14" stroke="#98a6a8" stroke-width="2"/><path d="M8 3l8 7-8 7z" fill="#98a6a8"/></svg></button>
      <button class="db" disabled aria-label="快进"><svg viewBox="0 0 20 20"><path d="M3 3l7 7-7 7zM10 3l8 7-8 7z" fill="#98a6a8"/></svg></button>
    </div>
    <div class="brow mid">
      <button class="db big en" aria-label="模拟"><svg viewBox="0 0 28 28"><circle cx="14" cy="14" r="12.500" fill="#eef2f0" stroke="#98a6a8" stroke-width="1.500"/><circle cx="14" cy="11" r="4.500" fill="none" stroke="#98a6a8" stroke-width="2"/><circle cx="14" cy="17" r="4.500" fill="none" stroke="#98a6a8" stroke-width="2"/></svg></button>
      <button class="db big en" aria-label="刀具"><svg viewBox="0 0 28 28"><path d="M0 0h28v28H0z" fill="#d4dcd8"/><path d="M9 0h11v28H9z" fill="#98a6a8"/></svg></button>
      <button class="db big en" aria-label="刀柄"><svg viewBox="0 0 28 28"><path d="M3 0h22v7l-7 7v14h-7V14L3 7z" fill="#98a6a8"/></svg></button>
    </div>
    <fieldset class="f1">
      <legend>显示控制器</legend>
      <div class="line"><label for="st1">每次手动时的位</label><input id="st1" value="1"></div>
      <div class="line"><label for="st2">每次重绘时的位移</label><input id="st2" value="1"></div>
      <div class="speed"><label for="ql">快速</label>
        <span class="ticks"><i></i><input id="ql" type="range" disabled><i></i></span>
        <span>品质</span></div>
      <label class="ck"><input type="checkbox" checked>在每个刀具路径之后更新</label>
    </fieldset>
    <fieldset class="f2">
      <legend>停止选项</legend>
      <label class="ck"><input type="checkbox">碰撞停止</label>
      <label class="ck"><input type="checkbox">换刀停止</label>
      <label class="ck"><input type="checkbox">完成每个操作后停止</label>
    </fieldset>
    <label class="ck lone"><input type="checkbox">祥细模式</label>
    <div class="brow tools">
      <button class="db" disabled aria-label="配置"><svg viewBox="0 0 20 20"><path d="M1 5h3l2-2 3 2 3-2 2 2h4v12H1z" fill="#98a6a8"/></svg></button>
      <button class="db" disabled aria-label="切割"><svg viewBox="0 0 20 20"><path d="M14 2L7 13M18 7L7 12" stroke="#98a6a8" stroke-width="2"/><circle cx="5" cy="13" r="2.500" fill="none" stroke="#98a6a8" stroke-width="1.500"/><circle cx="8" cy="16" r="2" fill="none" stroke="#98a6a8" stroke-width="1.500"/></svg></button>
      <button class="db" disabled aria-label="测量"><svg viewBox="0 0 20 20"><path d="M2 4v13h16V4M6 9v8M9 6v11M12 9v8M15 6v11" fill="none" stroke="#98a6a8" stroke-width="1.500"/></svg></button>
      <button class="db" disabled aria-label="缩放"><svg viewBox="0 0 20 20"><path d="M2 2l16 16M17 2l-4 5M2 16l6-3" stroke="#98a6a8" stroke-width="2"/><circle cx="10" cy="10" r="5" fill="none" stroke="#98a6a8" stroke-width="1.500"/></svg></button>
      <button class="db" disabled aria-label="保存"><svg viewBox="0 0 20 20"><path d="M2 2h16v16H7l-5-4z" fill="#98a6a8"/><path d="M6 3h9v6H6zM11 12h5v5h-5z" fill="#e4eeee"/></svg></button>
    </div>
    <div class="brow run">
      <button class="db en" aria-label="慢"><svg viewBox="0 0 20 20"><circle cx="10" cy="4" r="2" fill="#000"/><path d="M10 5v7l-3 7M10 12l4 6M10 7l-5 5M10 7l5 5" fill="none" stroke="#000" stroke-width="1.800"/></svg></button>
      <input type="range" class="spd" value="100" aria-label="速度">
      <button class="db en" aria-label="快"><svg viewBox="0 0 20 20"><circle cx="14" cy="3" r="2" fill="#000"/><path d="M13 5l-4 6 4 3-2 5M9 11l-6 5M12 6L7 5M12 8l6 2" fill="none" stroke="#000" stroke-width="3"/><path d="M1 5h4M0 9h5M1 13h3" stroke="#000"/></svg></button>
    </div>
    <dl>
      <dt>操作号码:</dt><dd>4</dd><dt>刀具路径:</dt><dd>曲面精加工环绕等距</dd><dt>刀具号码:</dt><dd>3</dd><dt>刀具名称:</dt><dd class="in">5. BALL ENDMILL</dd>
    </dl>
    <input class="pct" value="30%" disabled aria-label="进度">
    <div class="brow ok">
      <button class="db en" aria-label="确定"><svg><use href="#chk"/></svg></button>
      <button class="db en" aria-label="取消"><svg viewBox="0 0 20 20"><path d="M5 1l5 5 5-5 4 4-5 5 5 5-4 4-5-5-5 5-4-4 5-5-5-5z" fill="#1038f0" stroke="#001890"/></svg></button>
      <button class="db en" aria-label="帮助"><svg><use href="#q"/></svg></button>
    </div>
  </div>
</section>
</body>
</html>
```

FILE: styles.css
```css
* { box-sizing: border-box; }
html, body { height: 100%; }
body {
  margin: 0; display: flex; flex-direction: column; overflow: hidden; position: relative;
  background: #d9e8ea; color: #000;
  font: 12px/16px "Liberation Sans", "Noto Sans CJK SC", sans-serif;
}
button, input, select { font: inherit; color: inherit; margin: 0; padding: 0; }
button { background: none; border: 0; display: flex; align-items: center; justify-content: center; flex: none; }
h1, h2, p, ul, dl, dd { margin: 0; padding: 0; font-size: 12px; font-weight: normal; }
ul { list-style: none; }
svg { display: block; flex: none; }
a { color: inherit; text-decoration: none; }
tt { font: 10px/16px "Liberation Mono", monospace; }
.sprite { position: absolute; width: 0; height: 0; }
.i16 { width: 17px; height: 17px; }

/* title and menu */
.titlebar {
  flex: none; height: 26px; padding: 0 3px 0 1px; display: flex; align-items: center; gap: 3px;
  background: linear-gradient(#ff8a20, #ffa040 3px, #f86a10 8px, #ff6800 20px, #e85800);
  color: #fff; text-shadow: 1px 1px #7a2800;
}
.titlebar h1 { flex: 1; white-space: pre; display: flex; align-items: center; font-weight: bold; }
.titlebar h1 span { font: bold 13px/20px "Liberation Mono", monospace; }
.titlebar h1 b { font-size: 15px; line-height: 20px; font-weight: 500; }
.winbtns { display: flex; gap: 2px; }
.wb, .close { width: 21px; height: 21px; border: 1px solid #fff; border-radius: 3px; background: linear-gradient(135deg, #f89868, #d84c18); }
.wb svg, .close svg { width: 17px; height: 17px; }
.wb.blue { background: linear-gradient(135deg, #6880f0, #2838a8); }
.menubar { flex: none; height: 21px; display: flex; align-items: center; gap: 12px; padding: 0 5px; white-space: nowrap; }
.menubar a { display: flex; gap: 6px; }
.menubar .analyze { width: 36px; }
.menubar u { font: 10px/17px "Liberation Mono", monospace; }

/* toolbars */
.row { flex: none; display: flex; height: 30px; border-top: 1px solid #a4b4bc; background: #d9e8ea; }
.grp { display: flex; align-items: center; padding-right: 4px; border-right: 1px solid #a0aeb4; box-shadow: inset 1px 1px #fff; flex: none; background: linear-gradient(#e6eff0, #d4e3e5); }
.grp::before { content: ""; width: 3px; height: 20px; margin: 0 3px 0 4px; background: repeating-linear-gradient(#8c9aa0 0 2px, transparent 2px 4px); }
.t { width: 23px; height: 24px; flex: none; }
.t svg { width: 18px; height: 18px; }
.a { width: 13px; height: 20px; flex: none; }
.a::after { content: ""; border: 3px solid transparent; border-top-color: #000; border-bottom: 0; }
.a.off::after { border-top-color: #a0aeb0; }
.s { width: 2px; height: 20px; margin: 0 3px; flex: none; background: #aabac0; border-right: 1px solid #fff; }

.coord { height: 31px; }
.cgrp { display: flex; align-items: center; background: #ccffff; flex: none; border-right: 1px solid #90a4a8; }
.first { width: 450px; padding: 0 9px 0 5px; gap: 6px; }
.second { padding: 0 8px 0 4px; gap: 9px; }
.second::before { content: ""; width: 2px; height: 24px; border: 1px solid #90a4a8; border-left: 0; }
.key { width: 21px; height: 21px; border: 1px solid #b4c8cc; border-radius: 2px; background: #e6f2f2; }
.key svg, .flat svg { width: 20px; height: 20px; }
.key:disabled { color: #8c9a9c; }
.key.g { width: 22px; height: 22px; background: #d9e8ea; }
.wide { width: 45px; }
.first .key:nth-of-type(2) { margin-left: 8px; }
.push { margin-left: auto; }
.dark { width: 21px; height: 20px; background: #8c9a9c; }
.sm { width: 11px; background: #d9e8ea; border: 1px solid #b4c8cc; margin: 0 -3px; }
.gr { display: flex; gap: 2px; }
.flat { width: 32px; }
.btn { border: 1px solid #5a3c28; border-radius: 3px; background: #f4f2ee; }
.btn.q { width: 22px; height: 22px; }
.btn svg { width: 18px; height: 18px; }
.ribbon { height: 31px; background: #ccffff; align-items: center; padding-left: 1px; }
.vline { width: 2px; height: 26px; margin-left: 4px; border-left: 1px solid #90a4a8; }
.ribbon .help { margin-left: 917px; }

.combo { display: flex; align-items: center; background: #fff; border: 1px solid #b08878; height: 20px; flex: none; position: relative; }
.combo.gray { background: #d9e8ea; border-color: #a8bcc0; }
.combo select { appearance: none; border: 0; background: none; width: 100%; height: 100%; padding: 0 2px; }
.combo select:disabled { color: #8c9a9c; opacity: 1; }
.combo.gray::after { content: ""; position: absolute; right: 6px; top: 5px; width: 5px; height: 5px; border: solid #a8b8ba; border-width: 0 2px 2px 0; transform: rotate(45deg); pointer-events: none; }
.num { width: 71px; }
.num select { font-size: 11px; }
.win { width: 72px; }

/* work area */
main { flex: 1; min-height: 0; display: flex; border-top: 1px solid #8ca0a8; }
.side { width: 41px; flex: none; background: linear-gradient(90deg, #e8eeee, #dce8ea); }
.vbar { border-bottom: 1px solid #8ca0a8; background: #d9e8ea; display: flex; flex-direction: column; align-items: flex-start; padding: 6px 0 3px 3px; }
.hgrip { width: 32px; height: 3px; margin: 0 2px 3px 0; background: repeating-linear-gradient(90deg, #a0aeb2 0 2px, transparent 2px 4px); }
.v { width: 20px; height: 22px; }
.v svg { width: 19px; height: 19px; }
.vv { display: flex; align-items: center; }
.hs { width: 32px; margin: 2px 0 4px; background: #a0b0b4; border-bottom: 1px solid #fff; height: 2px; }

.manager { width: 299px; flex: none; display: flex; flex-direction: column; border-left: 1px solid #90a0a4; border-right: 1px solid #70787c; min-height: 0; }
.manager h2 { background: #c4d0d4; padding-left: 4px; height: 17px; font-size: 11px; line-height: 15px; flex: none; color: #222; }
.tabs { display: flex; align-items: flex-end; height: 22px; flex: none; border-bottom: 1px solid #98a8b0; }
.tabs button { height: 18px; width: 40px; border: 1px solid #98a8b0; border-bottom: 0; background: #eef2f2; margin-right: 3px; border-radius: 2px 2px 0 0; }
.tabs .on { height: 21px; width: 62px; background: #fff; border-top: 2px solid #3898e0; margin-right: 0; }
.mt { height: 31px; flex: none; display: flex; align-items: center; padding-left: 7px; border-bottom: 1px solid #a8b8bc; }
.tabs + .mt { margin-top: 3px; }
.mt + .mt { border: 0; margin-bottom: 4px; }
.m { width: 23px; height: 24px; }
.m svg { width: 19px; height: 19px; }
.treebox { flex: 1; min-height: 0; margin: 0 5px 6px; display: flex; flex-direction: column; border: 1px solid #808c90; background: #fff; }
.tree { flex: 1; min-height: 0; overflow: hidden; padding: 2px 0 0 5px; }
.tree li { position: relative; }
.tree li li::before { content: ""; position: absolute; left: 6px; top: -8px; bottom: 0; border-left: 1px dotted #555; }
.tree li li:first-child::before { top: 0; }
.tree li li:last-child::before { bottom: auto; height: 16px; }
.tree ul ul { padding-left: 19px; }
.tree p { display: flex; align-items: center; height: 16px; white-space: nowrap; position: relative; }
.tree p svg { width: 16px; height: 16px; margin-right: 6px; }
.x, .d { width: 9px; height: 9px; margin: 0 5px 0 2px; flex: none; }
.x { border: 1px solid #8c9494; background: #f4f0ec; font: 9px/7px "Liberation Sans", sans-serif; text-align: center; }
.d { width: 7px; height: 1px; margin: 0 3px 0 6px; border-top: 1px dotted #555; }
mark { background: #b4602c; color: #fff; font: 10px/15px "Liberation Mono", monospace; padding: 0 2px; outline: 1px dotted #e0b090; margin-left: -2px; }
.hscroll { height: 17px; flex: none; display: flex; background: #fbf3f1; padding-right: 17px; }
.sb { width: 17px; background: #ffd0c0; border: 1px solid #f8b8a8; border-radius: 2px; }
.sb svg { width: 15px; height: 15px; }
.thumb { width: 136px; background: linear-gradient(#ffd8cc, #f8bca8); border: 1px solid #f0a890; border-radius: 2px; display: flex; justify-content: center; align-items: center; }
.thumb i { width: 8px; height: 7px; background: repeating-linear-gradient(90deg, #d89080 0 1px, transparent 1px 2px); }
.track { flex: 1; }

.canvas { flex: 1; min-width: 0; background: #fff; border-top: 1px solid #000; border-left: 1px solid #000; position: relative; overflow: hidden; }
.part { position: absolute; left: 239px; top: 174px; width: 250px; height: 185px; }
.right { width: 31px; flex: none; border-left: 1px solid #90a0a4; overflow: hidden; padding-right: 2px; }
.rbar { display: flex; flex-direction: column; align-items: center; padding-top: 6px; }
.rbar .hgrip { width: 20px; margin: 0 0 2px; }
.rbar .hs { width: 20px; margin: 3px 0; }
.gray2 { border-top: 1px solid #90a0a4; margin-top: 4px; padding-top: 4px; }

/* status bar */
.status { flex: none; height: 27px; border-top: 2px solid #90a4ac; display: flex; align-items: center; gap: 5px; justify-content: flex-end; background: #d4e4e8; }
.s3 { width: 26px; } .s4 { width: 52px; } .s2 { width: 28px; } .s5 { width: 36px; margin: 0 3px; }
.s6 { width: 45px; margin-left: 2px; } .s7 { width: 49px; } .s8 { width: 18px; margin-left: 2px; }
.lz { margin: 0 -5px 0 10px; }
.z { width: 110px; } .lv { width: 145px; margin-left: -3px; } .pt { width: 34px; } .ln, .ln2 { width: 61px; }
.combo input { border: 0; flex: 1; width: 10px; height: 16px; padding: 0 1px; background: none; }
.z input { background: #80ffff; font: 10px/16px "Liberation Mono", monospace; }
.ch { width: 14px; height: 18px; background: #ffd0c0; display: flex; align-items: center; justify-content: center; flex: none; }
.ch::after { content: ""; width: 5px; height: 5px; margin-top: -3px; border: solid #805040; border-width: 0 2px 2px 0; transform: rotate(45deg); }
.combo button { flex: 1; min-width: 0; }
.pt svg { width: 11px; height: 11px; }
.ln svg, .ln2 svg { width: 40px; height: 12px; }
.color { width: 52px; height: 19px; background: #00f800; color: #033; font: 10px/16px "Liberation Mono", monospace; }
.big.a { background: #e6f2f2; margin: 0 6px 0 -2px; }
.big.a::after { border-width: 7px 5px 0; }

/* task bar */
.taskbar { flex: none; height: 30px; display: flex; align-items: center; background: linear-gradient(#f08048, #dc5c20 5px, #d85820 24px, #b84810); color: #fff; border-top: 1px solid #a0482c; }
.start { width: 96px; height: 29px; gap: 5px; justify-content: flex-start; padding-left: 8px; border-radius: 0 10px 10px 0; background: linear-gradient(#70b868, #389038 6px, #2f8a34 22px, #1c6820); font: italic 19px/22px "Noto Sans CJK SC", sans-serif; color: #fff; text-shadow: 1px 1px 1px #143; }
.start svg { width: 21px; height: 21px; }
.quick { display: flex; align-items: center; gap: 3px; padding: 0 6px 0 10px; width: 101px; }
.quick svg { width: 20px; height: 20px; }
.quick span { margin: -12px 0 0 6px; font-size: 13px; }
.tasks { display: flex; gap: 2px; flex: 1; }
.tasks button { width: 159px; height: 25px; border-radius: 2px; background: linear-gradient(#ff9860, #f07840 4px, #ee7438); justify-content: flex-start; padding-left: 9px; gap: 3px; font: 10px/16px "Liberation Mono", monospace; color: #fff; white-space: pre; }
.tasks em { font: 12px/16px "Noto Sans CJK SC", sans-serif; margin: 0 -3px; }
.tasks svg { width: 16px; height: 16px; }
.tasks .act { background: linear-gradient(#983c10, #b84c18 4px); }
.kbd { width: 17px; height: 17px; margin-right: 20px; }
.tray { width: 149px; height: 29px; display: flex; align-items: center; gap: 2px; padding-left: 9px; border-left: 1px solid #803808; background: linear-gradient(#f8b840, #f09c10 5px, #ec9810 24px, #c87808); }
.tray svg { width: 17px; height: 17px; }
.tray time { margin-left: 2px; font: 10px/16px "Liberation Mono", monospace; }

/* verification dialog */
.dialog { position: absolute; left: 159px; top: 28px; width: 221px; border: 3px solid #d47c70; border-top-width: 0; border-radius: 7px 7px 0 0; background: #d9e8ea; }
.dialog header { height: 27px; margin: 0 -3px; padding: 0 5px 0 7px; display: flex; align-items: center; justify-content: space-between; border-radius: 7px 7px 0 0; background: linear-gradient(#d87860, #e89878 6px, #e89c7c 20px, #dc8468); }
.dialog header h2 { color: #fff0e8; font-weight: bold; font-size: 13px; }
.close { width: 20px; height: 20px; background: linear-gradient(135deg, #8878c8, #58489c); }
.dbody { padding: 12px 10px 18px 11px; display: flex; flex-direction: column; }
.brow { display: flex; justify-content: space-between; padding: 0 8px 0 6px; }
.db { width: 29px; height: 28px; border: 1px solid #a8bcbe; border-radius: 2px; }
.db svg { width: 20px; height: 20px; }
.db.en { border-color: #5c4020; border-radius: 3px; background: linear-gradient(#fff, #ece8e0); }
.mid { justify-content: center; gap: 6px; margin-top: 11px; }
.db.big { width: 32px; height: 32px; padding: 0; margin: 0; }
.db.big svg { width: 28px; height: 28px; }
fieldset { border: 1px solid #b4c8cc; border-radius: 3px; margin: 0; padding: 0 5px; min-width: 0; }
legend { color: #c04c10; padding: 0 2px; line-height: 16px; }
.f1 { margin-top: 4px; height: 149px; }
.f1 .line { display: flex; justify-content: space-between; align-items: center; padding: 0 5px 0 18px; height: 26px; white-space: nowrap; }
.line input { width: 60px; height: 23px; margin-top: -1px; border: 1px solid #98a898; background: #80ffff; padding: 0 0 6px 2px; }
.line:first-of-type { margin-top: 2px; }
.speed { display: flex; align-items: center; color: #98a6a8; padding: 0 8px; height: 46px; margin-bottom: 1px; margin-top: 2px; }
.ticks { display: flex; flex-direction: column; width: 66px; margin: 0 12px 0 27px; }
.ticks i { height: 3px; margin: 0 3px 0 4px; background: repeating-linear-gradient(90deg, #8c9a9c 0 1px, transparent 1px 14px); }
input[type=range] { appearance: none; background: linear-gradient(#98a0a4, #98a0a4) center / 100% 1px no-repeat; height: 24px; width: 100%; }
input[type=range]::-webkit-slider-thumb { appearance: none; width: 11px; height: 20px; background: #f0f4f4; border: 1px solid #a0b0b0; border-radius: 2px; }
input.spd { width: 78px; }
input.spd::-webkit-slider-thumb { border-color: #8c9a9c; border-top: 3px solid #38b048; border-bottom: 3px solid #38b048; height: 22px; }
.ck { display: flex; align-items: center; gap: 2px; height: 23px; white-space: nowrap; }
.ck input { appearance: none; width: 13px; height: 13px; border: 1px solid #704828; background: linear-gradient(135deg, #dcdcd8, #fff); display: grid; place-items: center; }
.ck input:checked::after { content: ""; width: 7px; height: 3px; margin-top: -3px; border: solid #20a020; border-width: 0 0 2px 2px; transform: rotate(-45deg); }
.f2 { margin-top: 7px; height: 99px; }
.f2 legend { margin-bottom: 4px; }
.lone { margin: 3px 0 0 6px; }
.tools { margin-top: 7px; }
.run { margin-top: 16px; align-items: center; }
dl { margin-top: 12px; border: 1px solid #b4c8cc; border-radius: 3px; display: grid; grid-template-columns: 67px 1fr; padding: 2px 0 2px 5px; line-height: 20px; height: 84px; white-space: nowrap; }
.in { padding-left: 9px; font-size: 11px; }
.pct { align-self: center; width: 42px; height: 23px; margin-top: 10px; border: 1px solid #a0a898; background: #d9e8ea; color: #98a6a8; text-align: right; font-size: 11px; padding: 0 2px 2px 0; }
.ok { margin-top: 9px; padding: 0 10px; }
.ok .db { width: 53px; }
```
